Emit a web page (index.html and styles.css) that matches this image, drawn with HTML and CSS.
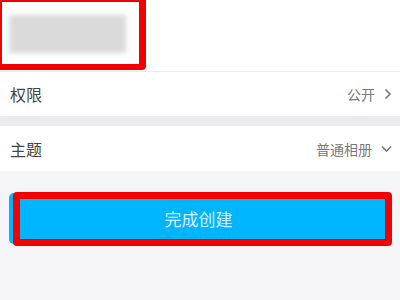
FILE: index.html
```html
<!DOCTYPE html>
<html lang="zh">
<head>
<meta charset="utf-8">
<link rel="stylesheet" href="styles.css">
</head>
<body>
<div class="page">
  <div class="header">
    <div class="name-blur"></div>
    <div class="mark mark-top"></div>
  </div>
  <div class="row row-first">
    <span class="label">权限</span>
    <span class="value">公开
      <svg class="chev" width="8" height="12" viewBox="0 0 8 12"><path d="M1.5 1.5 L6 6 L1.5 10.5" fill="none" stroke="#777" stroke-width="1.6"/></svg>
    </span>
  </div>
  <div class="gap"></div>
  <div class="row">
    <span class="label">主题</span>
    <span class="value">普通相册
      <svg class="chev" width="11" height="8" viewBox="0 0 11 8"><path d="M1 1.5 L5.5 6 L10 1.5" fill="none" stroke="#777" stroke-width="1.6"/></svg>
    </span>
  </div>
  <div class="footer">
    <div class="btn-wrap">
      <div class="btn">完成创建</div>
      <div class="mark mark-btn"></div>
    </div>
  </div>
</div>
</body>
</html>
```
FILE: styles.css
```css
html, body {
  margin: 0;
  padding: 0;
  background: #f5f5f7;
  font-family: "Noto Sans CJK SC", "Noto Sans", sans-serif;
}
.page {
  width: 400px;
  height: 300px;
  overflow: hidden;
  background: #f5f5f7;
}
.header {
  position: relative;
  height: 72px;
  background: #fff;
  border-bottom: 1px solid #ececec;
  padding: 15px 0 0 9px;
  box-sizing: border-box;
}
.name-blur {
  width: 117px;
  height: 38px;
  background: #dadada;
  filter: blur(2.5px);
}
.mark {
  position: absolute;
  border: 6px solid #f20000;
  border-radius: 4px;
  box-sizing: border-box;
}
.mark-top {
  left: -4px;
  top: -4px;
  width: 150px;
  height: 74px;
  border-width: 6px 7px 6px 6px;
}
.row {
  height: 45px;
  background: #fff;
  display: flex;
  align-items: center;
  justify-content: space-between;
  padding: 0 8px 0 10px;
  box-sizing: border-box;
}
.row-first {
  height: 44px;
}
.label {
  font-size: 16px;
  color: #444;
}
.value {
  font-size: 14px;
  color: #7a7a7a;
  display: flex;
  align-items: center;
  gap: 9px;
}
.chev {
  display: block;
}
.gap {
  height: 10px;
  background: #ebebed;
}
.footer {
  padding: 22px 12px 0 9px;
}
.btn-wrap {
  position: relative;
}
.btn {
  height: 51px;
  background: #00b5ff;
  border-radius: 5px;
  color: #d6f0ff;
  font-size: 17px;
  display: flex;
  align-items: center;
  justify-content: center;
}
.mark-btn {
  left: 4px;
  top: -1px;
  width: 379px;
  height: 54px;
  border-width: 7px;
}
```
